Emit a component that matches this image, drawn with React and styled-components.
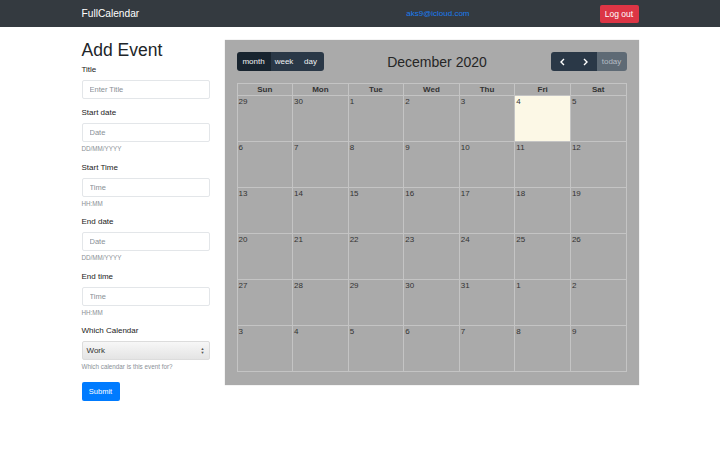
import React from 'react';
import styled, { createGlobalStyle } from 'styled-components';

const GlobalStyle = createGlobalStyle`
    body {
        margin: 0;
        background: #fff;
        font-family: "Liberation Sans", Arial, sans-serif;
        color: #212529;
    }
`;

const Navbar = styled.nav`
    height: 27px;
    background: #343a40;
`;

const NavInner = styled.div`
    width: 557px;
    height: 100%;
    margin: 0 auto;
    display: flex;
    align-items: center;
`;

const Brand = styled.span`
    color: #fff;
    font-size: 10.2px;
`;

const Email = styled.a`
    margin-left: auto;
    color: #1a7cf0;
    font-size: 8px;
    text-decoration: none;
`;

const LogoutButton = styled.button`
    margin-left: 130px;
    width: 39px;
    height: 18px;
    padding: 0;
    border: none;
    border-radius: 2px;
    background: #dc3545;
    color: #fff;
    font-family: inherit;
    font-size: 8.5px;
`;

const Container = styled.div`
    width: 557px;
    margin: 0 auto;
    display: flex;
    align-items: flex-start;
    gap: 15px;
    padding-top: 13px;
`;

const FormColumn = styled.div`
    width: 128px;
    display: flex;
    flex-direction: column;
`;

const Heading = styled.h2`
    margin: 0 0 5px;
    font-size: 17.5px;
    font-weight: 400;
    line-height: 20px;
`;

const Group = styled.div`
    display: flex;
    flex-direction: column;
    margin-bottom: ${(props) => (props.hasHelp ? 10.5 : 9)}px;
`;

const Label = styled.label`
    font-size: 8px;
    line-height: 10px;
    margin-bottom: 5px;
    color: #222;
`;

const Input = styled.input`
    box-sizing: border-box;
    width: 128px;
    height: 19px;
    border: 1px solid #e3e6e9;
    border-radius: 2px;
    padding: 0 7px;
    font-family: inherit;
    font-size: 7.5px;
    &::placeholder {
        color: #8a9096;
    }
`;

const Help = styled.small`
    font-size: 6.3px;
    line-height: 7px;
    margin-top: 3px;
    color: #8a9096;
`;

const Select = styled.div`
    box-sizing: border-box;
    width: 128px;
    height: 19px;
    border: 1px solid #dcdcdc;
    border-radius: 2px;
    padding: 0 4px;
    display: flex;
    align-items: center;
    justify-content: space-between;
    background: linear-gradient(#f7f7f7, #e4e4e4);
    font-size: 8px;
    color: #333;
`;

const Arrows = styled.span`
    font-size: 4px;
    line-height: 4px;
    display: flex;
    flex-direction: column;
    color: #555;
`;

const SubmitButton = styled.button`
    width: 38px;
    height: 19px;
    padding: 0;
    border: none;
    border-radius: 2px;
    background: #007bff;
    color: #fff;
    font-family: inherit;
    font-size: 7.5px;
    margin-top: 1px;
`;

const CalendarPanel = styled.div`
    width: 414px;
    box-sizing: border-box;
    background: #aaaaaa;
    padding: 12px 12px 13px;
    box-shadow: 0 0 1px rgba(0, 0, 0, 0.25);
`;

const Toolbar = styled.div`
    display: flex;
    align-items: center;
    justify-content: space-between;
    height: 19px;
    margin-bottom: 12px;
`;

const ButtonGroup = styled.div`
    display: flex;
    border-radius: 3px;
    overflow: hidden;
    height: 19px;
`;

const ToolButton = styled.button`
    width: ${(props) => props.w}px;
    height: 19px;
    padding: 0;
    border: none;
    background: ${(props) => props.bg || '#2a3847'};
    color: ${(props) => props.fg || '#f0f2f4'};
    font-family: inherit;
    font-size: 8px;
    display: flex;
    align-items: center;
    justify-content: center;
`;

const Title = styled.h2`
    margin: 0;
    font-size: 14px;
    font-weight: 400;
    color: #262626;
`;

const Table = styled.div`
    display: grid;
    grid-template-columns: repeat(7, 1fr);
    grid-template-rows: 12px repeat(6, 1fr);
    height: 288px;
    border-top: 1px solid #c4c4c4;
    border-left: 1px solid #c4c4c4;
`;

const HeadCell = styled.div`
    border-right: 1px solid #c4c4c4;
    border-bottom: 1px solid #c4c4c4;
    font-size: 8px;
    font-weight: 700;
    color: #333;
    text-align: center;
    line-height: 12px;
`;

const DayCell = styled.div`
    border-right: 1px solid #c4c4c4;
    border-bottom: 1px solid #c4c4c4;
    background: ${(props) => (props.today ? '#fcf8e6' : 'transparent')};
    font-size: 8px;
    color: #333;
    padding: 1px 0 0 1px;
`;

const dayNames = ['Sun', 'Mon', 'Tue', 'Wed', 'Thu', 'Fri', 'Sat'];

// dates shown in the month grid, starting from Sun 29 Nov
const days = [];
for (let i = 0; i < 42; i++) {
    const d = new Date(2020, 10, 29 + i);
    days.push({ n: d.getDate(), today: d.getMonth() === 11 && d.getDate() === 4 });
}

const fields = [
    { label: 'Start date', placeholder: 'Date', help: 'DD/MM/YYYY' },
    { label: 'Start Time', placeholder: 'Time', help: 'HH:MM' },
    { label: 'End date', placeholder: 'Date', help: 'DD/MM/YYYY' },
    { label: 'End time', placeholder: 'Time', help: 'HH:MM' },
];

export default function App() {
    return (
        <>
            <GlobalStyle />
            <Navbar>
                <NavInner>
                    <Brand>FullCalendar</Brand>
                    <Email href="#">aks9@icloud.com</Email>
                    <LogoutButton>Log out</LogoutButton>
                </NavInner>
            </Navbar>
            <Container>
                <FormColumn>
                    <Heading>Add Event</Heading>
                    <Group>
                        <Label>Title</Label>
                        <Input placeholder="Enter Title" />
                    </Group>
                    {fields.map((f) => (
                        <Group hasHelp key={f.label}>
                            <Label>{f.label}</Label>
                            <Input placeholder={f.placeholder} />
                            <Help>{f.help}</Help>
                        </Group>
                    ))}
                    <Group hasHelp>
                        <Label>Which Calendar</Label>
                        <Select>
                            <span>Work</span>
                            <Arrows>
                                <span>▲</span>
                                <span>▼</span>
                            </Arrows>
                        </Select>
                        <Help>Which calendar is this event for?</Help>
                    </Group>
                    <SubmitButton>Submit</SubmitButton>
                </FormColumn>
                <CalendarPanel>
                    <Toolbar>
                        <ButtonGroup>
                            <ToolButton w={34} bg="#18242f">month</ToolButton>
                            <ToolButton w={27}>week</ToolButton>
                            <ToolButton w={26}>day</ToolButton>
                        </ButtonGroup>
                        <Title>December 2020</Title>
                        <ButtonGroup>
                            <ToolButton w={23}>
                                <svg width="7" height="8" viewBox="0 0 7 8">
                                    <path d="M5 1 L2 4 L5 7" fill="none" stroke="#fff" strokeWidth="1.4" />
                                </svg>
                            </ToolButton>
                            <ToolButton w={23}>
                                <svg width="7" height="8" viewBox="0 0 7 8">
                                    <path d="M2 1 L5 4 L2 7" fill="none" stroke="#fff" strokeWidth="1.4" />
                                </svg>
                            </ToolButton>
                            <ToolButton w={30} bg="#5e6a75" fg="#b4bcc4">today</ToolButton>
                        </ButtonGroup>
                    </Toolbar>
                    <Table>
                        {dayNames.map((d) => (
                            <HeadCell key={d}>{d}</HeadCell>
                        ))}
                        {days.map((d, i) => (
                            <DayCell key={i} today={d.today}>
                                {d.n}
                            </DayCell>
                        ))}
                    </Table>
                </CalendarPanel>
            </Container>
        </>
    );
}
